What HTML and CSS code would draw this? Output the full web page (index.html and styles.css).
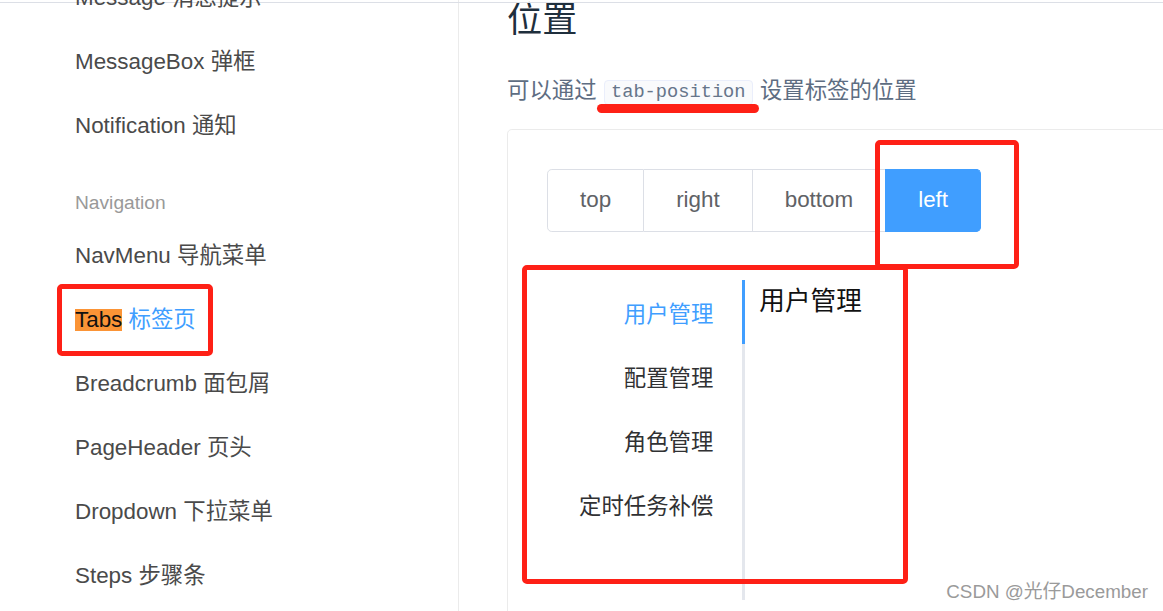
FILE: index.html
```html
<!DOCTYPE html>
<html lang="zh-CN">
<head>
<meta charset="utf-8">
<title>Tabs 标签页</title>
<link rel="stylesheet" href="styles.css">
</head>
<body>
<div class="page">
  <div class="header-edge"></div>
  <aside class="sidebar">
    <ul class="nav-list">
      <li class="nav-item">Message 消息提示</li>
      <li class="nav-item">MessageBox 弹框</li>
      <li class="nav-item">Notification 通知</li>
    </ul>
    <div class="nav-group-title">Navigation</div>
    <ul class="nav-list">
      <li class="nav-item">NavMenu 导航菜单</li>
      <li class="nav-item active"><span class="find-hit">Tabs</span> 标签页</li>
      <li class="nav-item">Breadcrumb 面包屑</li>
      <li class="nav-item">PageHeader 页头</li>
      <li class="nav-item">Dropdown 下拉菜单</li>
      <li class="nav-item">Steps 步骤条</li>
    </ul>
  </aside>
  <main class="content">
    <h3 class="section-title">位置</h3>
    <p class="section-desc">可以通过<code class="inline-code">tab-position</code>设置标签的位置</p>
    <div class="demo-block">
      <div class="radio-group">
        <span class="radio-btn">top</span>
        <span class="radio-btn">right</span>
        <span class="radio-btn">bottom</span>
        <span class="radio-btn checked">left</span>
      </div>
      <div class="tabs">
        <div class="tabs-header">
          <div class="tab-item active">用户管理</div>
          <div class="tab-item">配置管理</div>
          <div class="tab-item">角色管理</div>
          <div class="tab-item">定时任务补偿</div>
        </div>
        <div class="tabs-content">用户管理</div>
      </div>
    </div>
  </main>

  <div class="mark mark-sidebar"></div>
  <div class="mark mark-left"></div>
  <div class="mark mark-tabs"></div>
  <div class="mark-underline"></div>
  <div class="watermark">CSDN @光仔December</div>
</div>
</body>
</html>
```

FILE: styles.css
```css
* { box-sizing: border-box; }

html, body {
  margin: 0;
  padding: 0;
  background: #fff;
}

body {
  font-family: "Liberation Sans", "Noto Sans CJK SC", sans-serif;
}

.page {
  position: relative;
  display: flex;
  width: 1163px;
  height: 611px;
  overflow: hidden;
}

.header-edge {
  position: absolute;
  left: 0;
  right: 0;
  top: 2px;
  height: 1px;
  background: #dcdfe6;
}

/* sidebar */
.sidebar {
  flex: 0 0 459px;
  border-right: 1px solid #ebebeb;
  padding-left: 75px;
  margin-top: -34px;
}

.nav-list {
  list-style: none;
  margin: 0;
  padding: 0;
}

.nav-item {
  position: relative;
  font-size: 22.4px;
  line-height: 64px;
  height: 64px;
  color: #4a4a4a;
  white-space: nowrap;
}

.nav-item.active {
  color: #409eff;
}

.find-hit {
  display: inline-block;
  line-height: 22px;
  background: #fb9436;
  color: #111;
}

.nav-group-title {
  margin-top: 24px;
  font-size: 19.2px;
  line-height: 41.6px;
  color: #999;
}

/* main */
.content {
  flex: 1;
  padding-left: 48px;
  min-width: 0;
}

.section-title {
  margin: -1px 0 0;
  font-size: 35.2px;
  line-height: 42px;
  font-weight: 400;
  color: #1f2f3d;
}

.section-desc {
  margin: 33px 0 21.4px;
  font-size: 22.4px;
  line-height: 33.6px;
  color: #5e6d82;
  white-space: nowrap;
}

.inline-code {
  display: inline-block;
  margin: 0 7px;
  padding: 0 6.4px;
  font-family: "Liberation Mono", monospace;
  font-size: 18.7px;
  line-height: 23px;
  color: #66758a;
  background: #f9fafc;
  border: 1px solid #eaeefb;
  border-radius: 4px;
  vertical-align: 1px;
}

.demo-block {
  width: 1000px;
  height: 600px;
  border: 1px solid #ebebeb;
  border-radius: 4.8px;
  padding: 39px;
}

.radio-group {
  display: inline-flex;
  margin-bottom: 48px;
}

.radio-btn {
  display: block;
  padding: 19.2px 32px;
  font-size: 22.4px;
  line-height: 1;
  color: #606266;
  border: 1px solid #dcdfe6;
  border-left: 0;
  background: #fff;
}

.radio-btn:first-child {
  border-left: 1px solid #dcdfe6;
  border-radius: 4.8px 0 0 4.8px;
}

.radio-btn:last-child {
  border-radius: 0 4.8px 4.8px 0;
}

.radio-btn.checked {
  color: #fff;
  background: #409eff;
  border-color: #409eff;
  box-shadow: -1px 0 0 0 #409eff;
}

.tabs {
  display: flex;
  height: 320px;
}

.tabs-header {
  border-right: 3px solid #e4e7ed;
  margin-right: 14px;
}

.tab-item {
  height: 64px;
  line-height: 64px;
  padding: 0 29px 0 32px;
  text-align: right;
  font-family: "Noto Sans CJK SC", sans-serif;
  font-size: 22.4px;
  color: #303133;
  white-space: nowrap;
}

.tab-item.active {
  color: #409eff;
  box-shadow: 3px 0 0 0 #409eff;
}

.tabs-content {
  font-size: 25.6px;
  color: #111;
  font-family: "Noto Sans CJK SC", sans-serif;
  line-height: 37px;
}

/* annotations (overlays) */
.mark {
  position: absolute;
  border: 5px solid #fe2016;
  border-radius: 5px;
}

.mark-sidebar {
  left: 57px;
  top: 284px;
  width: 156px;
  height: 72px;
}

.mark-left {
  left: 875px;
  top: 140px;
  width: 144px;
  height: 129px;
}

.mark-tabs {
  left: 522px;
  top: 265px;
  width: 386px;
  height: 319px;
}

.mark-underline {
  position: absolute;
  left: 597px;
  top: 104px;
  width: 162px;
  height: 9px;
  border-radius: 5px;
  background: #fe2016;
}

.watermark {
  position: absolute;
  right: 15px;
  bottom: 6px;
  font-size: 18.8px;
  line-height: 26px;
  color: #9a9a9a;
  text-shadow: 0 0 1px #fff;
  white-space: nowrap;
}
```
